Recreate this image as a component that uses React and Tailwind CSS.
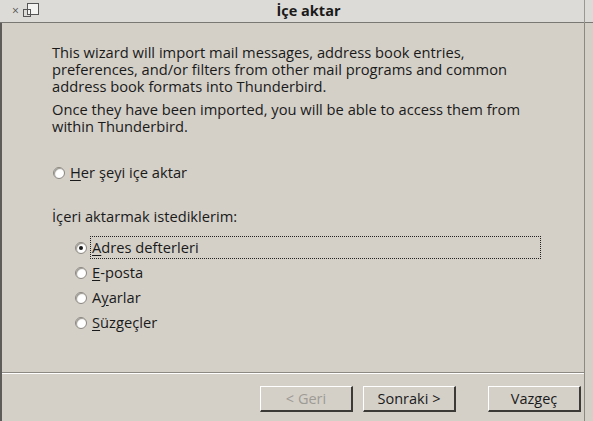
import React from 'react';

const font = { fontFamily: '"Open Sans", "Noto Sans", sans-serif' };

const Radio = ({ checked }) => (
  <span className="relative inline-block w-[12px] h-[12px] rounded-full bg-white border border-[#8a8680] shadow-[inset_1px_1px_1px_#9a968f] shrink-0">
    {checked && <span className="absolute left-[3px] top-[3px] w-[4px] h-[4px] rounded-full bg-[#1a1a1a]" />}
  </span>
);

const Option = ({ checked, u, rest, pre = '', focus }) => (
  <div className="flex items-center h-[25px]">
    <Radio checked={checked} />
    <div
      className={
        'ml-[4px] h-[21px] flex items-center pl-[1px] ' +
        (focus ? 'outline outline-1 outline-dotted outline-[#222] w-[449px]' : '')
      }
    >
      <span>
        {pre}
        <span className="underline underline-offset-2">{u}</span>
        {rest}
      </span>
    </div>
  </div>
);

const Btn = ({ children, disabled }) => (
  <button
    className={
      'w-[93px] h-[26px] bg-[#d4d0c8] border-t border-l border-t-white border-l-white border-b-2 border-r-2 border-b-[#3c3a36] border-r-[#3c3a36] text-[14.5px] ' +
      (disabled ? 'text-[#9e9b95]' : 'text-[#1a1a1a]')
    }
  >
    {children}
  </button>
);

export default function App() {
  return (
    <div className="w-[593px] h-[421px] bg-[#d4d0c8] flex flex-col overflow-hidden text-[#1a1a1a]" style={font}>
      <div className="h-[23px] bg-[#dcdbd7] border-b border-[#7a7873] flex items-center relative shrink-0">
        <span className="ml-[12px] text-[12px] text-[#555] leading-none">×</span>
        <svg width="16" height="16" viewBox="0 0 16 16" className="ml-[4px]">
          <rect x="4.5" y="0.5" width="11" height="11" fill="#f4f4f2" stroke="#555" />
          <rect x="0.5" y="6.5" width="7" height="7" fill="none" stroke="#555" />
        </svg>
        <div className="absolute left-0 right-0 top-0 h-[22px] flex items-center justify-center pl-[24px] font-bold text-[14.5px]">
          İçe aktar
        </div>
        <div className="absolute right-[8px] top-0 h-[23px] w-px bg-[#9a9893]" />
      </div>
      <div className="flex-1 flex">
        <div className="w-[2px] bg-[#5e5c58]" />
        <div className="w-[582px] flex flex-col">
          <div className="flex-1 pl-[50px] pt-[21px] text-[14.7px] leading-[17px]">
            <p className="w-[455px]">
              This wizard will import mail messages, address book entries, preferences, and/or filters from other mail programs and common address book formats into Thunderbird.
            </p>
            <p className="w-[470px] mt-[6px]">
              Once they have been imported, you will be able to access them from within Thunderbird.
            </p>
            <div className="mt-[25px] ml-[1px]">
              <Option u="H" rest="er şeyi içe aktar" />
            </div>
            <p className="mt-[23px]">İçeri aktarmak istediklerim:</p>
            <div className="mt-[10px] ml-[23px] flex flex-col">
              <Option checked focus u="A" rest="dres defterleri" />
              <Option u="E" rest="-posta" />
              <Option pre="A" u="y" rest="arlar" />
              <Option u="S" rest="üzgeçler" />
            </div>
          </div>
          <div className="h-[49px] border-t border-t-[#8c8983] shadow-[inset_0_1px_0_white] flex items-start pt-[13px] pl-[258px] shrink-0">
            <Btn disabled>&lt; Geri</Btn>
            <div className="w-[10px]" />
            <Btn>Sonraki &gt;</Btn>
            <div className="w-[32px]" />
            <Btn>Vazgeç</Btn>
          </div>
        </div>
        <div className="w-px bg-[#8c8983]" />
      </div>
    </div>
  );
}
